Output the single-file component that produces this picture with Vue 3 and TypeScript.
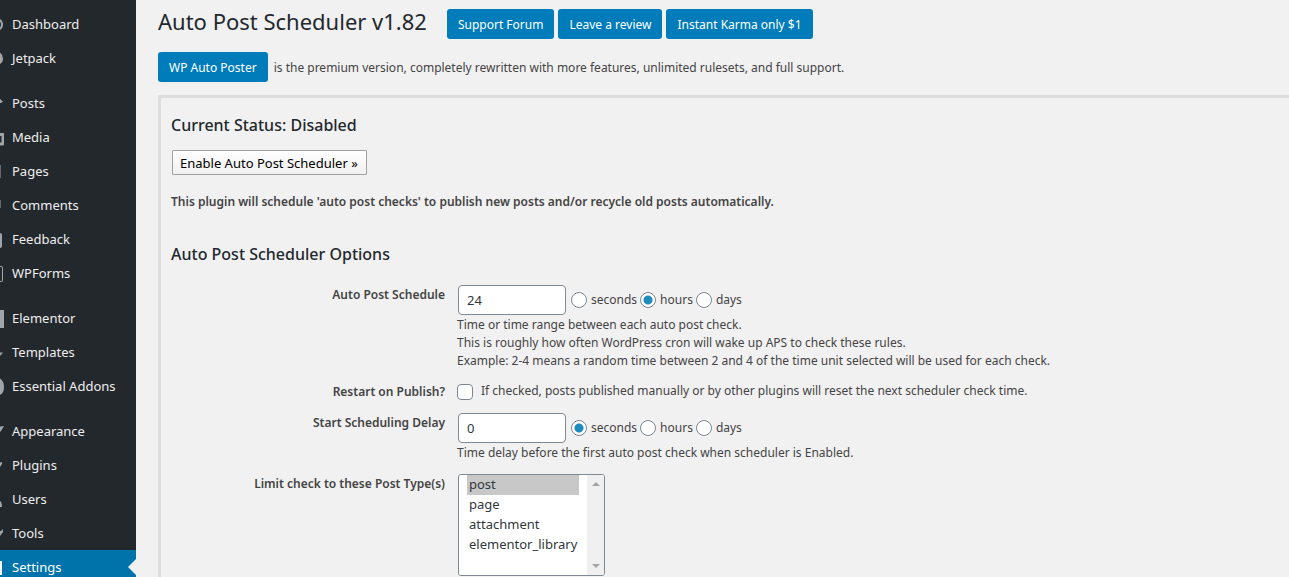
<script setup lang="ts">
import { ref } from 'vue'

interface MenuItem {
  label: string
  icon: string
  shade?: string
  current?: boolean
}

// Each icon is the visible 6x20 strip at the left edge of the menu.
const groups: MenuItem[][] = [
  [
    { label: 'Dashboard', icon: 'M0 5Q3 7 3 10.500Q3 14 0 16V13.500Q1 12 1 10.500Q1 9 0 7.500Z' },
    { label: 'Jetpack', icon: 'M0 4.500Q3 7 3 10.500Q3 14 0 16Z' },
  ],
  [
    { label: 'Posts', icon: 'M0 6L3 8.500L1 10H0Z' },
    { label: 'Media', icon: 'M0 6H4V17Q4 18.500 2.500 18.500H0V15.500H1.500V9H0Z' },
    { label: 'Pages', icon: 'M0 4H1V17H0Z', shade: '#666b70' },
    { label: 'Comments', icon: 'M0 5H1V13H0Z', shade: '#666b70' },
    { label: 'Feedback', icon: 'M0 4Q2 4 2 6V17Q2 19 0 19Z' },
    { label: 'WPForms', icon: 'M0 3H1Q3 3 3 5V17Q3 19 1 19H0V18H1Q2 18 2 17V5Q2 4 1 4H0Z' },
  ],
  [
    { label: 'Elementor', icon: 'M0 2H4V20H0Z' },
    { label: 'Templates', icon: 'M0 10.500H3L0 14Z' },
    { label: 'Essential Addons', icon: 'M0 2.500Q4 5 4 11Q4 17 0 19Z' },
  ],
  [
    { label: 'Appearance', icon: 'M0 5.500L4 5L1 10L0 11Z' },
    { label: 'Plugins', icon: 'M0 8L1 7H2V9L0 12Z' },
    { label: 'Users', icon: 'M0 12Q2 13 2 18H0Z' },
    { label: 'Tools', icon: 'M0 8L1 8L3 6V9L0 13Z' },
    { label: 'Settings', icon: 'M0 4H2V18H0Z', current: true },
  ],
]

const units = ['seconds', 'hours', 'days']
const postTypes = ['post', 'page', 'attachment', 'elementor_library']

const schedule = ref('24')
const scheduleUnit = ref('hours')
const restart = ref(false)
const delay = ref('0')
const delayUnit = ref('seconds')
const selectedTypes = ref<string[]>(['post'])
</script>

<template>
  <div class="admin">
    <nav class="menu" aria-label="Main menu">
      <ul v-for="(group, g) in groups" :key="g" class="group">
        <li v-for="item in group" :key="item.label">
          <a href="#" class="menu-link" :class="{ current: item.current }">
            <svg class="menu-icon" viewBox="0 0 6 20" aria-hidden="true">
              <path :d="item.icon" :fill="item.current ? '#fff' : item.shade || '#a0a5aa'" />
            </svg>
            <span>{{ item.label }}</span>
            <svg v-if="item.current" class="arrow" viewBox="0 0 8 16" aria-hidden="true">
              <path d="M8 0V16L0 8Z" fill="#f1f1f1" />
            </svg>
          </a>
        </li>
      </ul>
    </nav>

    <main class="content">
      <header class="heading">
        <h1>Auto Post Scheduler v1.82</h1>
        <div class="actions">
          <a href="#" class="primary">Support Forum</a>
          <a href="#" class="primary">Leave a review</a>
          <a href="#" class="primary">Instant Karma only $1</a>
        </div>
      </header>
      <p class="premium">
        <a href="#" class="primary">WP Auto Poster</a>
        <span>is the premium version, completely rewritten with more features, unlimited rulesets, and full support.</span>
      </p>

      <section class="panel">
        <h2>Current Status: Disabled</h2>
        <button type="button" class="enable">Enable Auto Post Scheduler »</button>
        <p class="note">This plugin will schedule 'auto post checks' to publish new posts and/or recycle old posts automatically.</p>
        <h2>Auto Post Scheduler Options</h2>

        <form class="options" @submit.prevent>
          <label class="name" for="schedule">Auto Post Schedule</label>
          <div class="field">
            <div class="controls">
              <input id="schedule" v-model="schedule" type="text" class="text" />
              <label v-for="u in units" :key="u" class="radio">
                <input v-model="scheduleUnit" type="radio" name="schedule-unit" :value="u" />
                <span>{{ u }}</span>
              </label>
            </div>
            <p>Time or time range between each auto post check.</p>
            <p>This is roughly how often WordPress cron will wake up APS to check these rules.</p>
            <p>Example: 2-4 means a random time between 2 and 4 of the time unit selected will be used for each check.</p>
          </div>

          <label class="name" for="restart">Restart on Publish?</label>
          <div class="field check">
            <input id="restart" v-model="restart" type="checkbox" />
            <p>If checked, posts published manually or by other plugins will reset the next scheduler check time.</p>
          </div>

          <label class="name" for="delay">Start Scheduling Delay</label>
          <div class="field">
            <div class="controls">
              <input id="delay" v-model="delay" type="text" class="text" />
              <label v-for="u in units" :key="u" class="radio">
                <input v-model="delayUnit" type="radio" name="delay-unit" :value="u" />
                <span>{{ u }}</span>
              </label>
            </div>
            <p>Time delay before the first auto post check when scheduler is Enabled.</p>
          </div>

          <label class="name" for="types">Limit check to these Post Type(s)</label>
          <div class="field">
            <div class="listbox">
              <select id="types" v-model="selectedTypes" multiple size="5">
                <option v-for="t in postTypes" :key="t" :value="t">{{ t }}</option>
              </select>
              <div class="track" aria-hidden="true">
                <svg viewBox="0 0 8 4"><path d="M0 4L4 0L8 4Z" fill="#a3a3a3" /></svg>
                <svg viewBox="0 0 8 4"><path d="M0 0L4 4L8 0Z" fill="#a3a3a3" /></svg>
              </div>
            </div>
          </div>
        </form>
      </section>
    </main>
  </div>
</template>

<style>
body {
  margin: 0;
  background: #f1f1f1;
}
</style>

<style scoped>
.admin {
  display: flex;
  height: 100vh;
  overflow: hidden;
  background: #f1f1f1;
  color: #444;
  font: 12px/18px "Segoe UI", "Noto Sans", "Open Sans", sans-serif;
}
h1, h2, p, ul {
  margin: 0;
  padding: 0;
}
.menu {
  flex: 0 0 136px;
  padding-top: 7px;
  background: #23282d;
}
.group {
  list-style: none;
  margin-bottom: 11px;
}
.menu-link {
  display: flex;
  align-items: center;
  gap: 6px;
  height: 34px;
  color: #eee;
  font-size: 13px;
  text-decoration: none;
  white-space: nowrap;
}
.menu-link.current {
  background: #0073aa;
  color: #fff;
}
.menu-icon {
  width: 6px;
  height: 20px;
}
.arrow {
  width: 8px;
  height: 16px;
  margin-left: auto;
}
.content {
  flex: 1;
  min-width: 0;
  padding: 0 0 0 22px;
}
.heading {
  display: flex;
  align-items: flex-start;
  gap: 20px;
  padding-top: 5px;
}
h1 {
  color: #23282d;
  font-size: 22px;
  font-weight: 400;
  line-height: 32px;
}
.actions {
  display: flex;
  gap: 4px;
  padding-top: 4px;
}
.primary {
  padding: 1px 11px 0;
  border-radius: 3px;
  background: #007cba;
  color: #fff;
  line-height: 29px;
  text-decoration: none;
  white-space: nowrap;
}
.premium {
  display: flex;
  align-items: baseline;
  gap: 6px;
  margin: 13px 0;
}
.panel {
  padding: 16px 10px;
  border: 3px solid #ddd;
  border-width: 3px 0 0 3px;
}
h2 {
  color: #23282d;
  font-size: 16px;
  font-weight: 500;
  line-height: 22px;
}
.enable {
  display: block;
  height: 25px;
  margin: 14px 1px 18px;
  padding: 0 8px 0 7px;
  border: 1px solid #a0a0a0;
  border-radius: 1px;
  background: linear-gradient(#fff, #f0f0f0);
  color: #000;
  font: inherit;
  font-size: 13px;
}
.note {
  margin-bottom: 32px;
  font-weight: 600;
}
.options {
  display: grid;
  grid-template-columns: 274px 1fr;
  gap: 12px;
  margin-top: 20px;
}
.name {
  padding-top: 1px;
  font-weight: 600;
  text-align: right;
}
.controls {
  display: flex;
  align-items: center;
  gap: 3px;
  margin: 0 0 1px 1px;
}
.text {
  box-sizing: border-box;
  width: 108px;
  height: 30px;
  margin: 0 2px 0 0;
  padding: 0 8px;
  border: 1px solid #7e8993;
  border-radius: 4px;
  background: #fff;
  color: #32373c;
  font: inherit;
  font-size: 13px;
}
.radio {
  display: flex;
  align-items: center;
  gap: 4px;
}
.radio input,
.check input {
  appearance: none;
  box-sizing: border-box;
  flex: none;
  width: 16px;
  height: 16px;
  margin: 0;
  border: 1px solid #7e8993;
  border-radius: 50%;
  background: #fff;
}
.radio input:checked {
  background: radial-gradient(circle, #1e8cbe 4px, #fff 5px);
}
.check {
  display: flex;
  gap: 8px;
}
.check input {
  margin-top: 2px;
  border-radius: 4px;
}
.check input:checked {
  background: #1e8cbe;
}
.listbox {
  display: flex;
  box-sizing: border-box;
  width: 147px;
  height: 102px;
  margin-left: 1px;
  overflow: hidden;
  border: 1px solid #7e8993;
  border-radius: 3px;
  background: #fff;
}
select {
  flex: 1;
  min-width: 0;
  height: 100px;
  padding: 0 8px;
  border: 0;
  outline: 0;
  overflow: hidden;
  background: #fff;
  color: #32373c;
  font: inherit;
  font-size: 13px;
}
option {
  height: 20px;
  min-height: 20px;
  padding: 0 2px;
  line-height: 20px;
}
option:checked {
  background: #c8c8c8 linear-gradient(#c8c8c8, #c8c8c8);
  color: #32373c;
}
.track {
  display: flex;
  flex-direction: column;
  justify-content: space-between;
  align-items: center;
  width: 17px;
  padding: 7px 0;
  box-sizing: border-box;
  background: #f0f0f0;
}
.track svg {
  width: 8px;
  height: 4px;
}
</style>
